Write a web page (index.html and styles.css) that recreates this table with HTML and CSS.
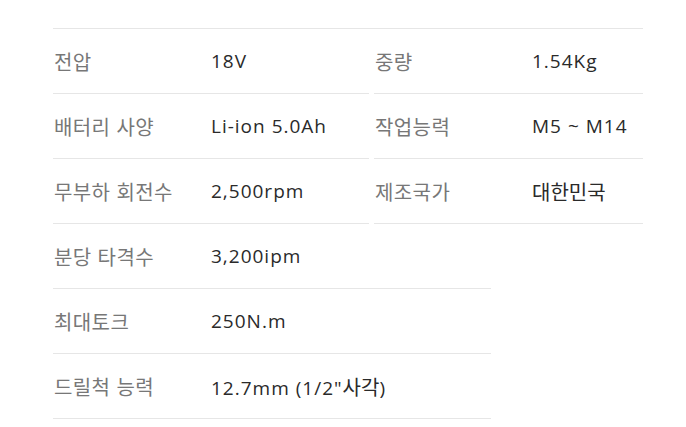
FILE: index.html
```html
<!DOCTYPE html>
<html lang="ko">
<head>
<meta charset="utf-8">
<link rel="stylesheet" href="styles.css">
</head>
<body>
<div class="spec">
  <div class="top">
    <ul class="col col-left">
      <li><span class="lbl">전압</span><span class="val">18V</span></li>
      <li><span class="lbl">배터리 사양</span><span class="val">Li-ion 5.0Ah</span></li>
      <li><span class="lbl">무부하 회전수</span><span class="val">2,500rpm</span></li>
    </ul>
    <ul class="col col-right">
      <li><span class="lbl">중량</span><span class="val">1.54Kg</span></li>
      <li><span class="lbl">작업능력</span><span class="val">M5 ~ M14</span></li>
      <li><span class="lbl">제조국가</span><span class="val"><span class="ko">대한민국</span></span></li>
    </ul>
  </div>
  <ul class="bottom">
    <li><span class="lbl">분당 타격수</span><span class="val">3,200ipm</span></li>
    <li><span class="lbl">최대토크</span><span class="val">250N.m</span></li>
    <li><span class="lbl">드릴척 능력</span><span class="val">12.7mm (1/2"<span class="ko">사각</span>)</span></li>
  </ul>
</div>
</body>
</html>
```
FILE: styles.css
```css
html, body {
  margin: 0;
  padding: 0;
  background: #fff;
}
body {
  font-family: "Noto Sans CJK KR", "Noto Sans", sans-serif;
  font-size: 20px;
}
.spec {
  margin: 28px 0 0 53px;
  width: 590px;
}
ul {
  list-style: none;
  margin: 0;
  padding: 0;
}
.top {
  display: flex;
  gap: 5px;
  border-top: 1px solid #e6e6e6;
}
.col-left {
  width: 316px;
}
.col-right {
  width: 269px;
}
li {
  display: flex;
  align-items: center;
  height: 64px;
  border-bottom: 1px solid #e6e6e6;
}
.lbl {
  color: #777;
  flex: 0 0 158px;
  padding-left: 1px;
  box-sizing: border-box;
  letter-spacing: 0.4px;
  font-size: 20px;
}
.val {
  color: #2a2a2a;
  font-family: "Open Sans", "Noto Sans CJK KR", sans-serif;
  font-size: 19px;
  letter-spacing: 1px;
}
.ko {
  font-family: "Noto Sans CJK KR", sans-serif;
  font-size: 20px;
  letter-spacing: 0;
}
.bottom {
  width: 438px;
}
```
